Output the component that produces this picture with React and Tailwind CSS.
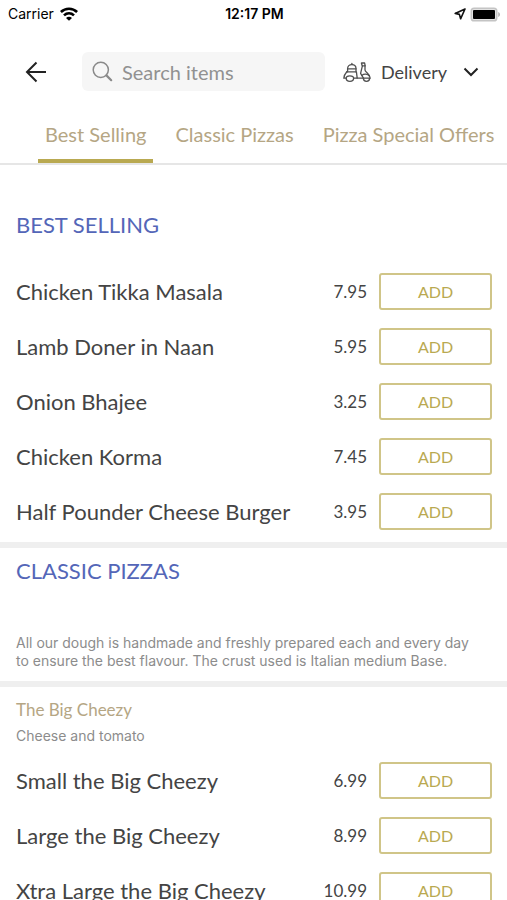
import React, { useState } from 'react';

const tabs = ['Best Selling', 'Classic Pizzas', 'Pizza Special Offers'];

const bestSelling = [
  { name: 'Chicken Tikka Masala', price: '7.95' },
  { name: 'Lamb Doner in Naan', price: '5.95' },
  { name: 'Onion Bhajee', price: '3.25' },
  { name: 'Chicken Korma', price: '7.45' },
  { name: 'Half Pounder Cheese Burger', price: '3.95' },
];

const bigCheezy = [
  { name: 'Small the Big Cheezy', price: '6.99' },
  { name: 'Large the Big Cheezy', price: '8.99' },
  { name: 'Xtra Large the Big Cheezy', price: '10.99' },
];

function WifiIcon() {
  return (
    <svg width="18" height="14" viewBox="0 0 18 14" fill="none" stroke="#000" strokeWidth="2.6">
      <path d="M0.9 5C5.5 0.6 12.5 0.6 17.1 5" />
      <path d="M4 8.4C6.9 5.7 11.1 5.7 14 8.4" />
      <path d="M9 13.8L6 10.9C7.8 9.4 10.2 9.4 12 10.9Z" fill="#000" stroke="none" />
    </svg>
  );
}

function LocationIcon() {
  return (
    <svg width="12" height="12" viewBox="0 0 12 12" fill="none" stroke="#111" strokeWidth="1.6" strokeLinejoin="round">
      <path d="M11 1L1.2 5.4L5.4 6.4L6.6 10.8Z" />
    </svg>
  );
}

function BatteryIcon() {
  return (
    <svg width="31" height="15" viewBox="0 0 31 15">
      <rect x="0.5" y="0.5" width="27" height="14" rx="3.6" fill="#c4c4c4" />
      <rect x="2" y="2" width="24" height="11" rx="2.2" fill="#e2e2e2" />
      <rect x="3" y="3" width="22" height="9" rx="1" fill="#000" />
      <path d="M28.2 5C30.6 5.8 30.6 9.2 28.2 10Z" fill="#b5b5b5" />
    </svg>
  );
}

function BackIcon() {
  return (
    <svg width="22" height="22" viewBox="0 0 22 22" fill="none" stroke="#222" strokeWidth="2">
      <path d="M21 11H2.5" />
      <path d="M11.5 1.5L2 11L11.5 20.5" />
    </svg>
  );
}

function SearchIcon() {
  return (
    <svg width="22" height="22" viewBox="0 0 22 22" className="shrink-0" fill="none" stroke="#8a8a8a">
      <circle cx="8.8" cy="8.8" r="7.6" strokeWidth="1.5" />
      <path d="M14.4 14.4L19.2 19.2" strokeWidth="2.2" strokeLinecap="round" />
    </svg>
  );
}

function ScooterIcon() {
  return (
    <svg width="28" height="20" viewBox="0 0 28 20" fill="none" stroke="#505050" strokeWidth="1.3" strokeLinejoin="round" strokeLinecap="round">
      {/* delivery box */}
      <path d="M4.6 9.8V6.6C4.6 4.2 6.4 2.6 8.9 2.6C11.4 2.6 13 4.2 13 6.6V9.8" />
      <path d="M8.9 2.4V1.4" />
      <path d="M4.8 6.8H13" />
      {/* seat and body */}
      <path d="M3.8 9.8H13.4L14.2 16.2H10.6" />
      <path d="M3.8 9.8C2.4 11.4 0.9 13.4 0.8 16.2H3.2" />
      <path d="M14.2 16.2H20.4" />
      {/* front shield and handlebar */}
      <path d="M18.4 1H21.6L22.2 3.8H19.2Z" />
      <path d="M19.4 3.8L17.6 11.4L20.4 16.2" />
      <path d="M22 3.8V8C22.2 10.6 27 11.6 27.2 16.2H26.6" />
      <path d="M18.8 13.4C21.2 11.4 24.8 11.8 26.4 14.2" />
      {/* wheels */}
      <path d="M3.2 16.2C3.2 18 4.8 19.3 6.9 19.3C9 19.3 10.6 18 10.6 16.2C10.6 14.8 9 13.8 6.9 13.8C4.8 13.8 3.2 14.8 3.2 16.2Z" />
      <path d="M20.4 16.2C20.4 18 21.6 19.3 23.5 19.3C25.4 19.3 26.6 18 26.6 16.2Z" />
    </svg>
  );
}

function ChevronIcon() {
  return (
    <svg width="16" height="10" viewBox="0 0 16 10" fill="none" stroke="#222" strokeWidth="2">
      <path d="M1.5 1.5L8 8L14.5 1.5" />
    </svg>
  );
}

function MenuRow({ item }) {
  return (
    <li className="flex h-[55px] items-center pr-[15px] pl-4">
      <span className="flex-1 text-[22px] text-[#444]">{item.name}</span>
      <span className="mr-3 text-[17px] text-[#444]">{item.price}</span>
      <button
        type="button"
        aria-label={`Add ${item.name}`}
        className="h-[37px] w-[113px] rounded-[3px] border-2 border-[#d0c588] text-base text-[#b9a951]"
      >
        ADD
      </button>
    </li>
  );
}

export default function App() {
  const [activeTab, setActiveTab] = useState(tabs[0]);
  const [query, setQuery] = useState('');

  return (
    <div className="flex h-screen flex-col overflow-hidden bg-white font-['Lato',sans-serif]">
      <div className="grid h-7 grid-cols-3 items-center pr-1.5 pl-2 font-['Inter',sans-serif] text-sm text-black">
        <div className="flex items-center gap-1.5">
          <span>Carrier</span>
          <WifiIcon />
        </div>
        <span className="text-center font-semibold">12:17 PM</span>
        <div className="flex items-center justify-end gap-1">
          <LocationIcon />
          <BatteryIcon />
        </div>
      </div>

      <header className="flex h-[87px] items-center pr-7 pl-[25px]">
        <button type="button" aria-label="Back">
          <BackIcon />
        </button>
        <label className="ml-[35px] flex h-[39px] min-w-0 flex-1 items-center gap-2 rounded-md bg-[#f6f6f6] px-2.5">
          <SearchIcon />
          <input
            type="text"
            aria-label="Search items"
            placeholder="Search items"
            value={query}
            onChange={(e) => setQuery(e.target.value)}
            className="w-full min-w-0 bg-transparent text-[20px] text-[#444] outline-none placeholder:text-[#919191]"
          />
        </label>
        <button type="button" className="ml-[18px] flex items-center text-lg text-[#444]">
          <ScooterIcon />
          <span className="mr-4 ml-2.5">Delivery</span>
          <ChevronIcon />
        </button>
      </header>

      <nav className="flex h-[50px] shrink-0 gap-[15px] overflow-hidden border-b-2 border-[#e6e6e6] pl-[38px]">
        {tabs.map((tab) => (
          <button
            key={tab}
            type="button"
            onClick={() => setActiveTab(tab)}
            className={
              tab === activeTab
                ? 'shrink-0 border-b-4 border-[#b9a951] px-[7px] pb-1.5 text-[20px] text-[#b5a684]'
                : 'shrink-0 border-b-4 border-transparent px-[7px] pb-1.5 text-[20px] text-[#b5a684]'
            }
          >
            {tab}
          </button>
        ))}
      </nav>

      <main className="min-h-0 flex-1 overflow-y-auto [scrollbar-width:none]">
        <section className="pt-11 pb-[3px]">
          <h2 className="mb-[23px] px-4 text-[22px] leading-8 text-[#5466b8]">BEST SELLING</h2>
          <ul>
            {bestSelling.map((item) => (
              <MenuRow key={item.name} item={item} />
            ))}
          </ul>
        </section>

        <section className="border-t-6 border-[#efefef] px-4 pt-[7px] pb-[11px]">
          <h2 className="mb-[47px] text-[22px] leading-8 text-[#5466b8]">CLASSIC PIZZAS</h2>
          <p className="pr-2 font-['Inter',sans-serif] text-sm leading-[18px] text-[#8c8c8c]">
            All our dough is handmade and freshly prepared each and every day to ensure the best flavour. The crust used is Italian medium Base.
          </p>
        </section>

        <section className="border-t-6 border-[#efefef] pt-[11px]">
          <h3 className="px-4 text-[17px] leading-6 text-[#b5a684]">The Big Cheezy</h3>
          <p className="mt-0.5 mb-[5px] px-4 font-['Inter',sans-serif] text-sm leading-6 text-[#8c8c8c]">Cheese and tomato</p>
          <ul>
            {bigCheezy.map((item) => (
              <MenuRow key={item.name} item={item} />
            ))}
          </ul>
        </section>
      </main>
    </div>
  );
}
